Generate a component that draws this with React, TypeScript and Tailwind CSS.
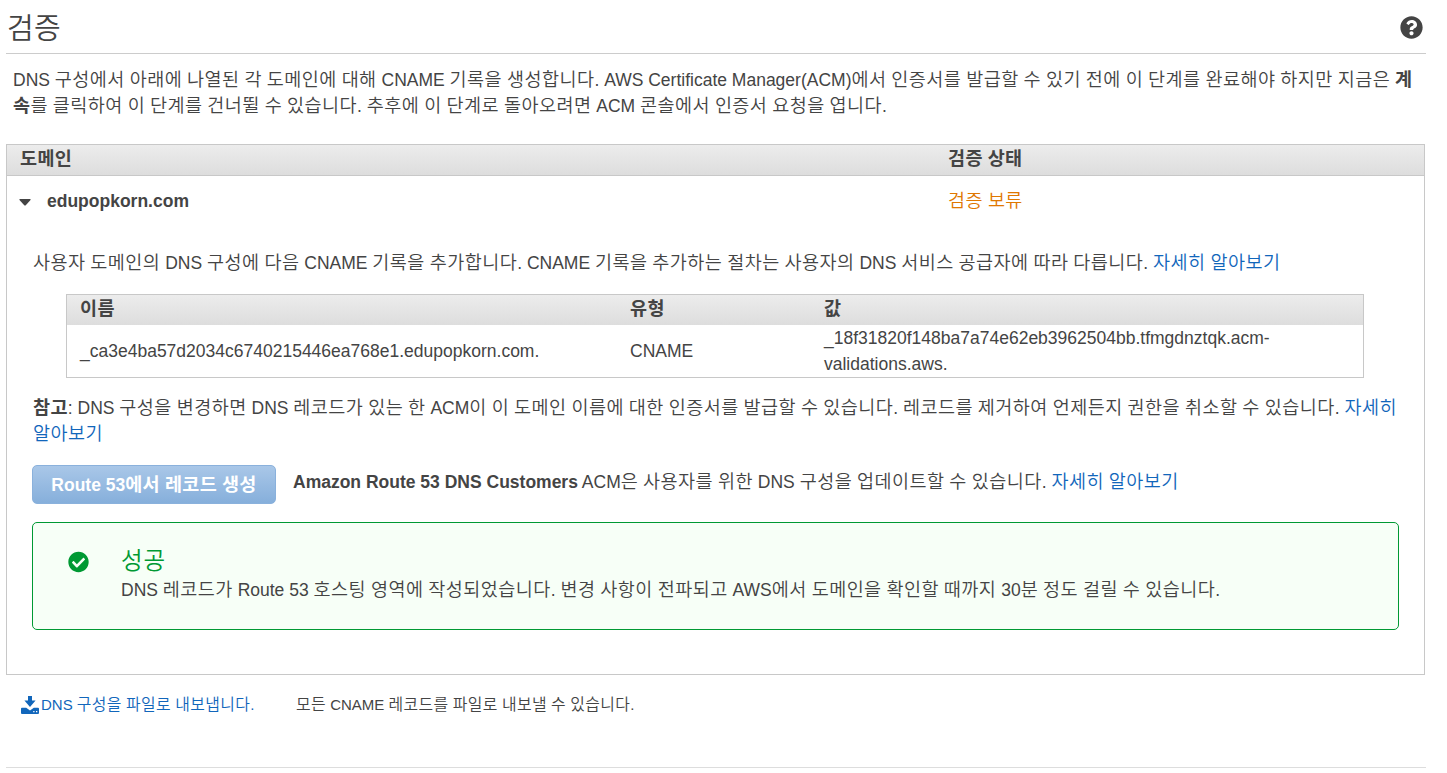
import { FaCheckCircle, FaQuestionCircle } from 'react-icons/fa';

// Hangul is set slightly larger than the Latin text around it
function Text({ children }: { children: string }) {
  return children.split(/([가-힣]+)/).map((run, i) =>
    i % 2 ? (
      <span key={i} className="text-[1.06em] leading-none tracking-[0.024em]">
        {run}
      </span>
    ) : (
      run
    ),
  );
}

function Bold({ children }: { children: string }) {
  return (
    <b className="font-bold">
      {children.split(/([가-힣]+)/).map((run, i) =>
        i % 2 ? (
          <span key={i} className="text-[1.06em] leading-none tracking-[0.018em]">
            {run}
          </span>
        ) : (
          run
        ),
      )}
    </b>
  );
}

function Link({ children }: { children: string }) {
  return (
    <a href="#" className="text-[#1166bb]">
      <Text>{children}</Text>
    </a>
  );
}

function DownloadIcon() {
  return (
    <svg viewBox="0 0 18 18" className="h-[18px] w-[18px] shrink-0" fill="#1166bb">
      <path d="M7 0h4v4.6h3.6L9 11 3.4 4.6H7z" />
      <path
        fillRule="evenodd"
        d="M1 11.8h4.2L9 14.4l3.8-2.6H17a1 1 0 0 1 1 1V17a1 1 0 0 1-1 1H1a1 1 0 0 1-1-1v-4.2a1 1 0 0 1 1-1zM12.2 15v1.2h1.3V15zM15 15v1.2h1.3V15z"
      />
    </svg>
  );
}

function RecordTable() {
  return (
    <div className="ml-[59px] mt-[18px] h-[84px] w-[1298px] border border-[#c8c8c8]">
      <div className="grid h-[30px] grid-cols-[550px_194px_1fr] bg-linear-to-b from-[#ececec] to-[#dddddd] pl-[13px] leading-[28px]">
        <div>
          <Bold>이름</Bold>
        </div>
        <div>
          <Bold>유형</Bold>
        </div>
        <div>
          <Bold>값</Bold>
        </div>
      </div>
      <div className="grid h-[52px] grid-cols-[550px_194px_1fr] items-center pl-[13px]">
        <div>_ca3e4ba57d2034c6740215446ea768e1.edupopkorn.com.</div>
        <div>CNAME</div>
        <div>
          _18f31820f148ba7a74e62eb3962504bb.tfmgdnztqk.acm-
          <br />
          validations.aws.
        </div>
      </div>
    </div>
  );
}

function SuccessBox() {
  return (
    <div className="ml-[25px] mt-[18px] flex h-[108px] w-[1367px] rounded-[5px] border border-[#009933] bg-[#f7fff7] pl-[35px]">
      <FaCheckCircle className="mt-[28px] h-[22px] w-[21px] text-[#009933]" />
      <div className="pl-8 pt-[23px]">
        <h2 className="text-[23.5px] leading-[31px] tracking-[0.04em] text-[#009933]">성공</h2>
        <p>
          <Text>
            DNS 레코드가 Route 53 호스팅 영역에 작성되었습니다. 변경 사항이 전파되고 AWS에서 도메인을 확인할 때까지 30분 정도 걸릴 수 있습니다.
          </Text>
        </p>
      </div>
    </div>
  );
}

export default function App() {
  return (
    <main className="h-[773px] w-[1447px] overflow-hidden whitespace-nowrap bg-white px-1.5 font-['Liberation_Sans','Noto_Sans_CJK_KR',sans-serif] text-[17.5px] font-[350] leading-[26px] text-[#444444]">
      <header className="flex h-[54px] w-[1420px] items-center justify-between border-b border-[#cccccc] pr-[3px]">
        <h1 className="pl-px pt-1 text-[29px] leading-[40px] tracking-[0.01em]">검증</h1>
        <FaQuestionCircle className="mt-0.5 h-[23px] w-[23px]" />
      </header>

      <p className="h-[90px] pl-[7px] pt-[13px]">
        <Text>
          DNS 구성에서 아래에 나열된 각 도메인에 대해 CNAME 기록을 생성합니다. AWS Certificate Manager(ACM)에서 인증서를 발급할 수 있기 전에 이 단계를 완료해야 하지만 지금은
        </Text>{' '}
        <Bold>계</Bold>
        <br />
        <Bold>속</Bold>
        <Text>를 클릭하여 이 단계를 건너뛸 수 있습니다. 추후에 이 단계로 돌아오려면 ACM 콘솔에서 인증서 요청을 엽니다.</Text>
      </p>

      <section className="h-[531px] w-[1419px] border border-[#c8c8c8]">
        <div className="grid h-[31px] grid-cols-[928px_1fr] border-b border-[#c8c8c8] bg-linear-to-b from-[#ececec] to-[#dddddd] pl-[13px] leading-[28px]">
          <div>
            <Bold>도메인</Bold>
          </div>
          <div>
            <Bold>검증 상태</Bold>
          </div>
        </div>

        <div className="grid h-[50px] grid-cols-[929px_1fr] items-center pl-3">
          <div className="flex items-center font-bold">
            <svg viewBox="0 0 12 7" className="mr-4 mt-0.5 h-[7px] w-3 shrink-0" fill="#444444">
              <path d="M1 0h10q1 0 .5 1L7 6q-1 1-2 0L.5 1Q0 0 1 0z" />
            </svg>
            edupopkorn.com
          </div>
          <div className="text-[#e07700]">
            <Text>검증 보류</Text>
          </div>
        </div>

        <p className="mt-6 pl-[26px]">
          <Text>
            사용자 도메인의 DNS 구성에 다음 CNAME 기록을 추가합니다. CNAME 기록을 추가하는 절차는 사용자의 DNS 서비스 공급자에 따라 다릅니다.
          </Text>{' '}
          <Link>자세히 알아보기</Link>
        </p>

        <RecordTable />

        <p className="mt-[17px] pl-[26px]">
          <Bold>참고</Bold>
          <Text>
            : DNS 구성을 변경하면 DNS 레코드가 있는 한 ACM이 이 도메인 이름에 대한 인증서를 발급할 수 있습니다. 레코드를 제거하여 언제든지 권한을 취소할 수 있습니다.
          </Text>{' '}
          <Link>자세히</Link>
          <br />
          <Link>알아보기</Link>
        </p>

        <div className="mt-[18px] flex pl-[25px]">
          <button className="h-[39px] w-[244px] rounded-[5px] border border-[#8ab1dc] bg-linear-to-b from-[#a9c7e8] to-[#86afdb] text-white">
            <Bold>Route 53에서 레코드 생성</Bold>
          </button>
          <p className="ml-[17px] mt-1">
            <Bold>Amazon Route 53 DNS Customers</Bold>{' '}
            <Text>ACM은 사용자를 위한 DNS 구성을 업데이트할 수 있습니다.</Text> <Link>자세히 알아보기</Link>
          </p>
        </div>

        <SuccessBox />
      </section>

      <footer className="flex h-[93px] w-[1420px] border-b border-[#dddddd] pl-[15px] pt-[17px] text-[15px]">
        <a href="#" className="flex h-[26px] w-[275px] items-center text-[#1166bb]">
          <DownloadIcon />
          <span className="pl-0.5">
            <Text>DNS 구성을 파일로 내보냅니다.</Text>
          </span>
        </a>
        <p>
          <Text>모든 CNAME 레코드를 파일로 내보낼 수 있습니다.</Text>
        </p>
      </footer>
    </main>
  );
}
